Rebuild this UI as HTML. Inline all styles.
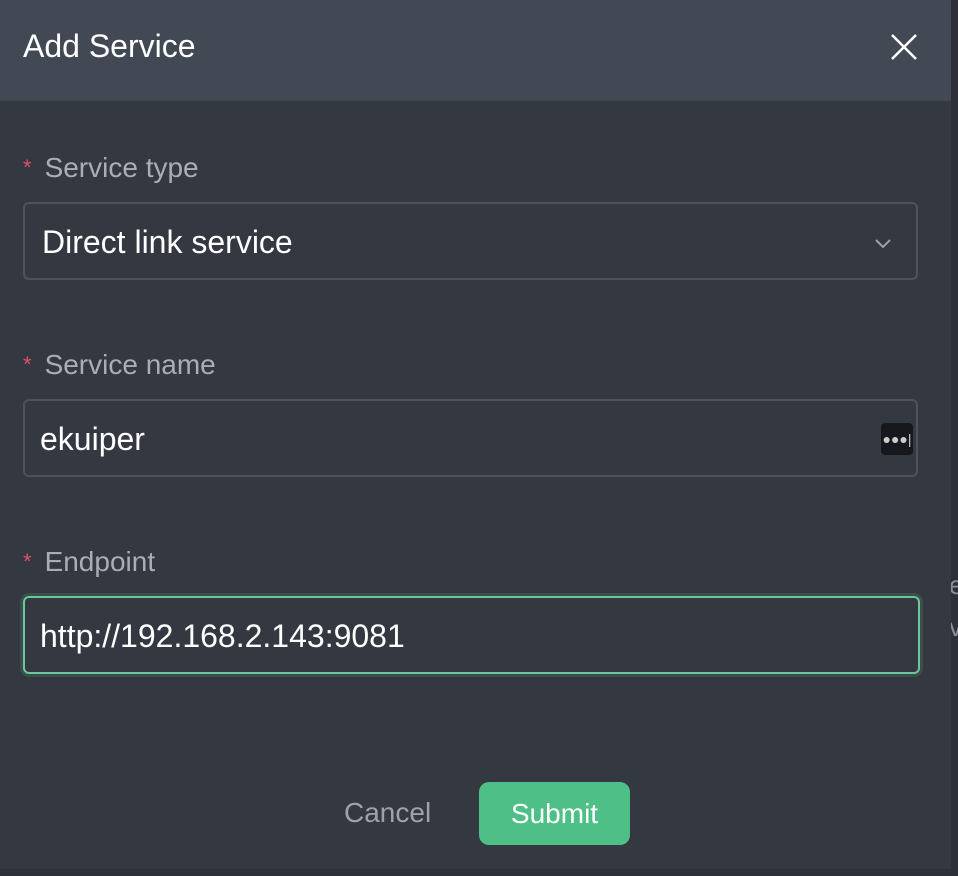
<!DOCTYPE html>
<html><head><style>
body{margin:0;width:958px;height:876px;background:#2d3038;font-family:"Liberation Sans",sans-serif;position:relative;overflow:hidden}
.bg{position:absolute;left:949px;font-size:26px;color:#8a8f98}
.modal{position:absolute;left:0;top:0;width:951px;height:869px;background:#343841}
.hd{height:101px;background:#424955;position:relative}
.hd h1{margin:0;position:absolute;left:23px;top:28px;font-size:32px;font-weight:normal;color:#fff}
.x{position:absolute;left:890px;top:33px}
.lbl{position:absolute;left:23px;font-size:28px;color:#a9adb4}
.lbl span{color:#e0506e;font-size:22px;margin-right:13px;position:relative;top:-2px}
.inp{position:absolute;left:23px;width:895px;height:78px;border:2px solid #4d525c;border-radius:6px;box-sizing:border-box;font-size:32px;color:#fff;padding-left:17px;line-height:76px}
.btn{position:absolute;font-size:28px}
</style></head><body>
<div class="bg" style="top:570px">e</div>
<div class="bg" style="top:612px">v</div>
<div class="modal">
<div class="hd"><h1>Add Service</h1>
<svg class="x" width="28" height="28" viewBox="0 0 28 28"><path d="M2 2L26 26M26 2L2 26" stroke="#fff" stroke-width="2.5"/></svg></div>
<div class="lbl" style="top:152px"><span>*</span>Service type</div>
<div class="inp" style="top:202px">Direct link service
<svg style="position:absolute;right:24px;top:34px" width="18" height="12" viewBox="0 0 18 12"><path d="M2 2L9 9L16 2" stroke="#9ca0a8" stroke-width="2" fill="none"/></svg></div>
<div class="lbl" style="top:349px"><span>*</span>Service name</div>
<div class="inp" style="top:399px;padding-left:15px">ekuiper
<div style="position:absolute;right:3px;top:22px;width:32px;height:32px;background:#16181d;border-radius:4px;color:#ccc;font-size:14px;line-height:32px;text-align:center">●●●|</div></div>
<div class="lbl" style="top:546px"><span>*</span>Endpoint</div>
<div class="inp" style="top:596px;width:897px;border:2px solid #6cc79b;box-shadow:0 0 0 3px rgba(108,199,155,0.15);padding-left:15px">http://192.168.2.143:9081</div>
<div class="btn" style="left:344px;top:797px;color:#9ea2a9">Cancel</div>
<div class="btn" style="left:479px;top:782px;width:151px;height:63px;background:#4fbf88;border-radius:10px;color:#fff;text-align:center;line-height:63px">Submit</div>
</div>
</body></html>
